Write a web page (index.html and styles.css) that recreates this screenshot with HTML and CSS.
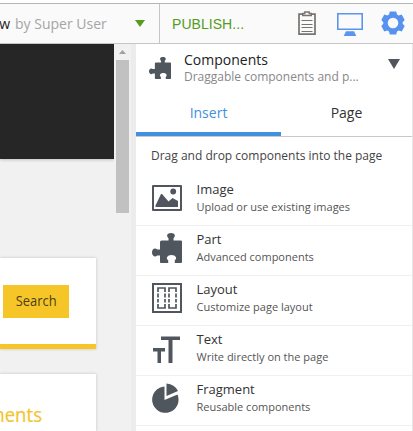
FILE: index.html
```html
<!DOCTYPE html>
<html lang="en">
<head>
<meta charset="utf-8">
<title>Page editor</title>
<link rel="stylesheet" href="styles.css">
</head>
<body>
<header class="toolbar">
  <div class="doc"><span class="doc-name">w</span><span class="doc-author">by Super User</span>
    <svg class="doc-arrow" width="10" height="7"><path d="M0 0h10L5 7z" fill="#569c22"/></svg>
  </div>
  <div class="actions">
    <span class="publish">PUBLISH...</span>
    <svg class="clipboard" width="18" height="24" viewBox="0 0 18 24" fill="none" stroke="#77736f"><path d="M4 3.2H1v20h16v-20h-3" stroke-width="1.7"/><path d="M4.7 4.5v-2h2.1V1h4.4v1.5h2.1v2z" stroke-width="1.4"/><path d="M3.500 9.500h11M3.500 13.500h11M3.500 16.500h11M3.500 20.500h11" stroke-width="1.200"/></svg>
    <svg class="monitor" width="26" height="23" viewBox="0 0 26 23"><path d="M.8.8h24.4v15.4H.8z" fill="none" stroke="#5c95ee" stroke-width="1.6"/><path d="M9 18.3h8l2.3 4.7H6.7z" fill="#5c95ee"/></svg>
    <svg class="gear" width="24" height="24" viewBox="0 0 24 24"><path fill="#5793ee" fill-rule="evenodd" d="M8.8.5h6.4l.8 2.9 1.8 1 2.9-.8L23.7 9l-2 2.2v1.6l2 2.2-3 5.4-2.9-.8-1.8 1-.8 2.900H8.800L8 20.600l-1.800-1-2.900.8L.3 15l2-2.200v-1.600L.3 9l3-5.400 2.900.8 1.800-1zM12 6.700a5.300 5.300 0 1 0 0 10.600a5.300 5.300 0 0 0 0-10.600z"/></svg>
  </div>
</header>
<div class="workspace">
  <main class="preview">
    <div class="banner"></div>
    <section class="card search-card"><button class="search"><span>Search</span></button></section>
    <section class="card comments-card"><h2>ments</h2></section>
  </main>
  <div class="scrollbar"><svg width="7" height="4"><path d="M3.500 0L7 4H0z" fill="#a0a0a0"/></svg><div class="thumb"></div></div>
  <aside class="panel">
    <div class="panel-head">
      <svg class="head-icon" width="22" height="22" viewBox="0 0 30 30"><use href="#puzzle"/></svg>
      <div class="head-copy"><div class="head-title">Components</div><div class="head-sub">Draggable components and p...</div></div>
      <svg class="head-arrow" width="12" height="10"><path d="M0 0h12L6 10z" fill="#50565e"/></svg>
    </div>
    <nav class="tabs"><span class="tab active">Insert</span><span class="tab">Page</span></nav>
    <p class="hint">Drag and drop components into the page</p>
    <ul class="list">
      <li>
        <svg width="32" height="32" viewBox="0 0 32 32"><path d="M2 4h28v24H2z" fill="none" stroke="#50565e" stroke-width="2" stroke-linejoin="round"/><path d="M4.500 25v-1.500l5.500-11.500h1l6.500 7.500 4-3.500 5.500 3V25z" fill="#50565e"/><circle cx="22.200" cy="9.500" r="2.900" fill="#50565e"/></svg>
        <div><div class="name">Image</div><div class="desc">Upload or use existing images</div></div>
      </li>
      <li>
        <svg width="32" height="32" viewBox="-1 -1 32 32"><path id="puzzle" fill="#50565e" d="M9.500 7.500h7V5.200C14 3 15 0 19 0s5 3 2.500 5.200v2.300H29q1 0 1 1V29q0 1-1 1h-6.200v-2.700c2.700-2 1-5.400-3.300-5.400s-6 3.400-3.300 5.400V30H9q-1 0-1-1v-6.500H5.200C3 24.500 0 23 0 19.500S3 14.500 5.200 16.500H8V9q0-1.500 1.500-1.500z"/></svg>
        <div><div class="name">Part</div><div class="desc">Advanced components</div></div>
      </li>
      <li>
        <svg width="32" height="32" viewBox="0 0 32 32" fill="none" stroke="#50565e"><path d="M2 2h28v28H2z" stroke-width="2"/><path d="M7 10V6h7v4M7 22v4h7v-4M18 10V6h7v4M18 22v4h7v-4" stroke-width="1.700"/><path d="M7 11.500v9M14 11.500v9M18 11.500v9M25 11.500v9" stroke-width="1.700" stroke-dasharray="4 1.500"/></svg>
        <div><div class="name">Layout</div><div class="desc">Customize page layout</div></div>
      </li>
      <li>
        <svg width="32" height="32" viewBox="0 0 32 32" fill="#50565e"><path d="M10 4.500h19V8h-7.500v23h-4V8H10zM2 16h12v3.500h-4V31H6.500V19.500H2z"/></svg>
        <div><div class="name">Text</div><div class="desc">Write directly on the page</div></div>
      </li>
      <li>
        <svg width="32" height="32" viewBox="0 0 32 32" fill="#50565e"><path d="M13.500 4.500V18L26.500 12.500A13.200 13.200 0 1 1 13.500 4.500z"/><path d="M15.500 1.500Q23.500 2 27 9l-11.500 5z"/></svg>
        <div><div class="name">Fragment</div><div class="desc">Reusable components</div></div>
      </li>
    </ul>
  </aside>
</div>
</body>
</html>
```
FILE: styles.css
```css
* { box-sizing: border-box; }
body { margin: 0; padding-top: 3px; width: 413px; height: 431px; overflow: hidden; background: #fff; color: #333; font-family: "Open Sans", sans-serif; }
svg { display: block; flex: none; }
.toolbar { display: flex; height: 41px; border-top: 1px solid #b5b5b5; border-bottom: 1px solid #c6c6c6; background: #fafafa; }
.doc { display: flex; align-items: center; width: 160px; padding-bottom: 1px; border-right: 1px solid #c6c6c6; font-size: 14px; white-space: nowrap; }
.doc-name { display: flex; justify-content: flex-end; width: 10px; margin-right: 5px; color: #222; }
.doc-author { width: 92px; color: #a5a5a5; }
.doc-arrow { margin-left: 28px; }
.actions { display: flex; flex: 1; }
.publish { width: 138px; padding-left: 12px; font: 14px/40px "Liberation Sans", sans-serif; letter-spacing: .05px; color: #569c22; }
.clipboard { margin-top: 7px; }
.monitor { margin: 9px 0 0 21px; }
.gear { margin: 7px 0 0 18px; }
.workspace { display: flex; height: 387px; }
.preview { width: 114px; background: #f1f1f1; overflow: hidden; }
.banner { height: 115px; background: #262626; box-shadow: 0 1px 3px #0003; }
.card { width: 96px; background: #fff; box-shadow: 0 0 3px #0003; }
.search-card { height: 91px; margin-top: 99px; padding: 27px 0 0 3px; border-bottom: 5px solid #f6c628; }
.search { display: flex; align-items: center; justify-content: center; width: 66px; height: 33px; padding: 0 0 3px; border: 0; background: #f6c628; color: #4b3e18; font: 14px "Open Sans", sans-serif; }
.search span { transform: scaleX(.92); }
.comments-card { height: 57px; margin-top: 25px; padding-top: 26px; }
.comments-card h2 { display: flex; justify-content: flex-end; width: 42px; margin: 0; font: 500 20px/30px "Open Sans", sans-serif; color: #f3c42e; -webkit-text-stroke: .2px #f3c42e; transform: scaleX(.93); transform-origin: right; }
.scrollbar { width: 22px; padding: 6px 0 0 2px; background: #f1f1f1; border-right: 5px solid #ececec; }
.scrollbar svg { margin-left: 3px; }
.thumb { width: 13px; height: 153px; margin-top: 6px; background: #c1c1c1; }
.panel { width: 277px; border-right: 1px solid #e7e7e7; background: #fff; }
.panel-head { display: flex; height: 47px; }
.head-icon { margin: 13px 0 0 13px; }
.head-copy { width: 204px; margin: 6px 0 0 13px; white-space: nowrap; }
.head-title { font-size: 14px; line-height: 19px; color: #222; }
.head-sub { font-size: 12px; line-height: 16px; color: #888; }
.head-arrow { margin: 15px 0 0; }
.tabs { display: flex; height: 46px; border-bottom: 1px solid #c9c9c9; font-size: 14px; line-height: 44px; text-align: center; }
.tab { flex: 1; }
.tab.active { flex: 0 0 145px; height: 45px; border-bottom: 4px solid #4191e0; color: #4191e0; }
.hint { margin: 0; height: 39px; padding: 10px 0 0 15px; font-size: 12px; line-height: 18px; color: #444; white-space: nowrap; }
.list { margin: 0; padding: 0; list-style: none; }
.list li { display: flex; height: 50px; padding: 4px 0 0 15px; border-bottom: 1px solid #f0f0f0; gap: 14px; }
.list li > svg { margin: 2px 0 0 -.5px; }
.name { font-size: 13px; line-height: 18px; color: #333; }
.desc { font-size: 11px; line-height: 17px; color: #555; white-space: nowrap; }
```
